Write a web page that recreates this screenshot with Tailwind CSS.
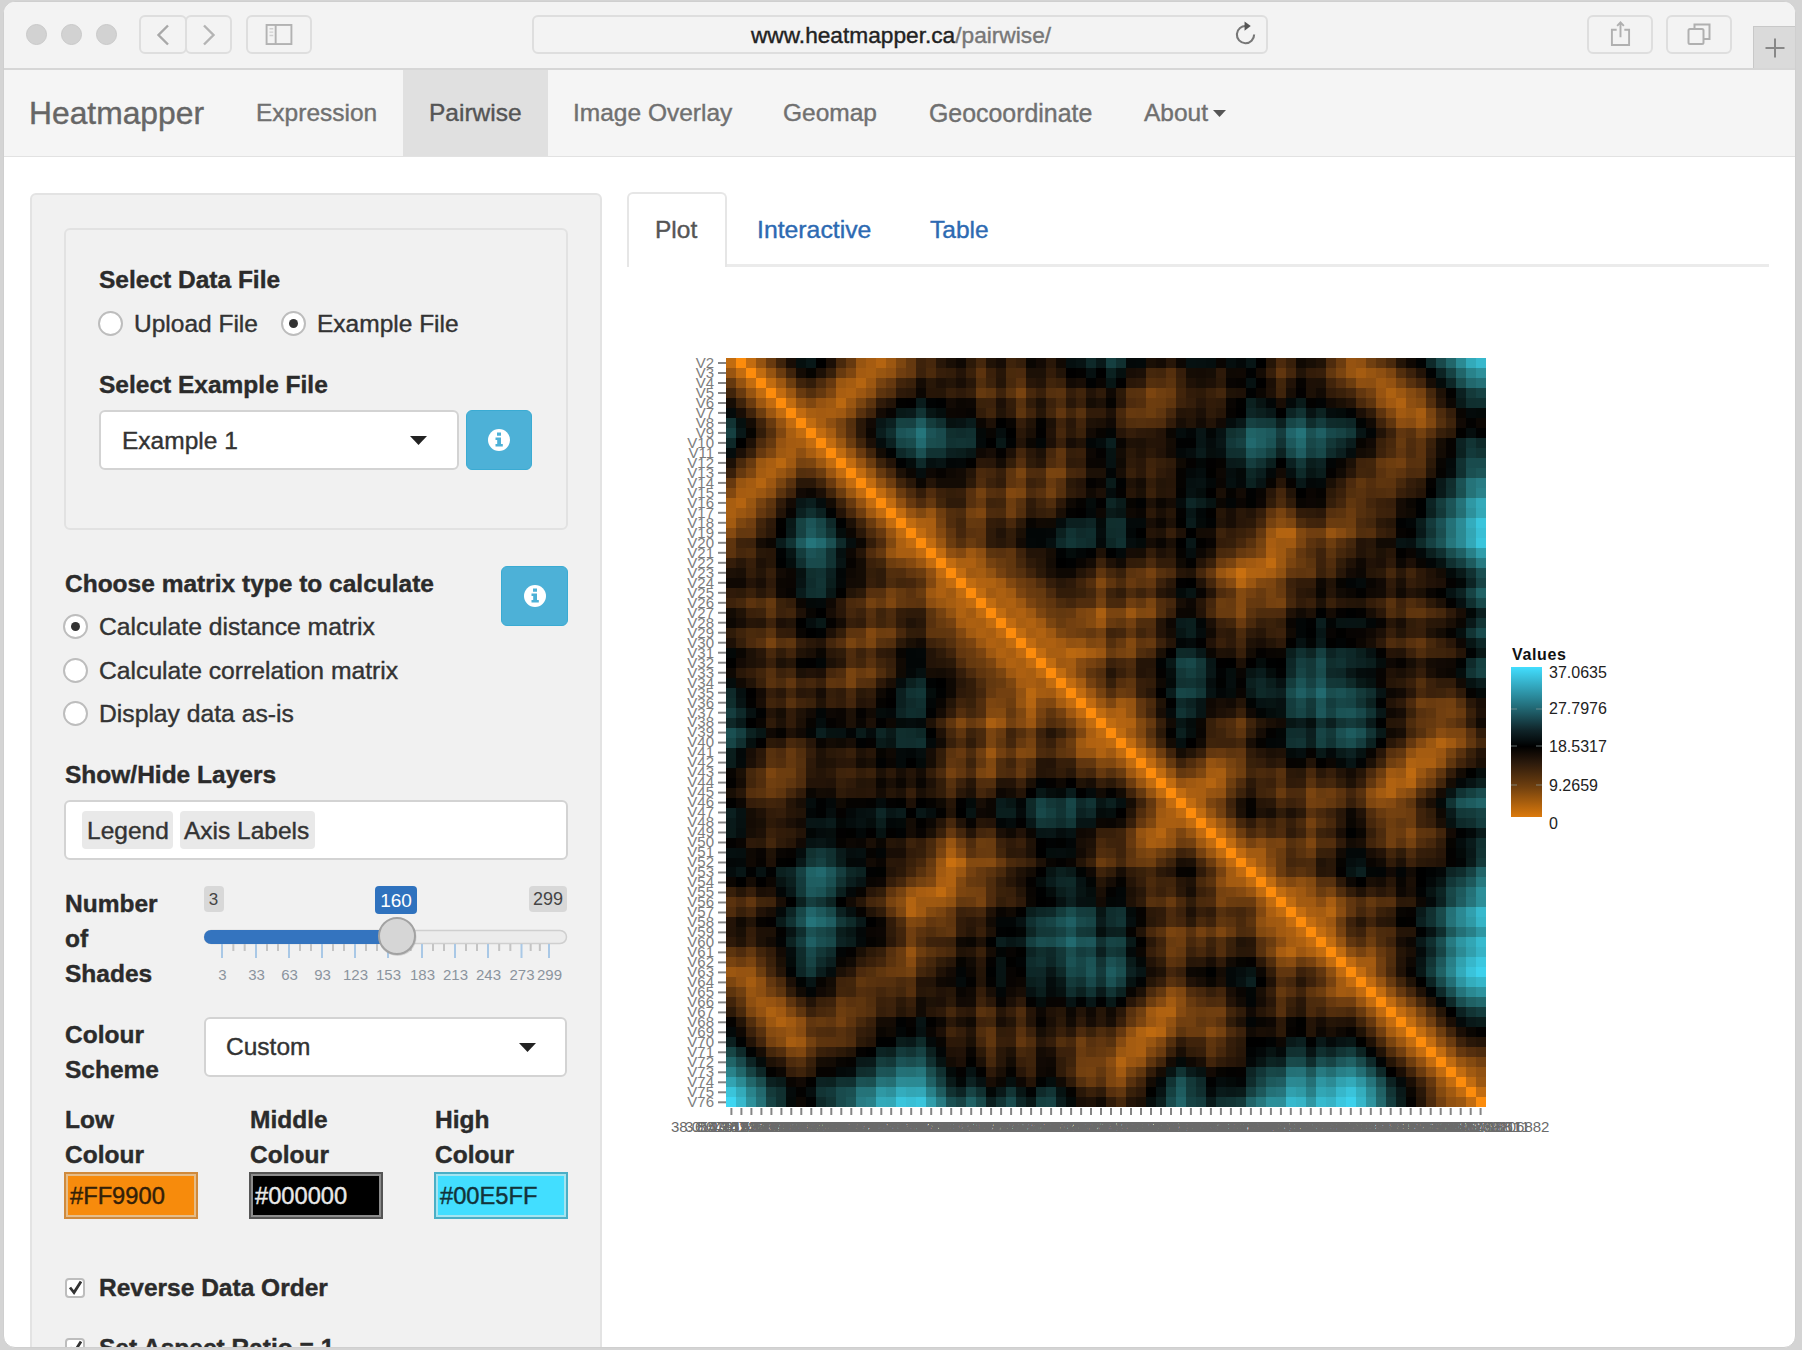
<!DOCTYPE html>
<html lang="en">
<head>
<meta charset="utf-8">
<title>Heatmapper</title>
<script src="https://cdn.jsdelivr.net/npm/@tailwindcss/browser@4"></script>
</head>
<body class="h-[1350px] w-[1802px] overflow-hidden bg-[#d4d4d4] pt-[1px] pl-[3px] font-['Liberation_Sans',Arial,sans-serif] text-[24.5px] leading-[35px] text-[#333] [-webkit-text-stroke-width:0.4px]">
<div class="relative h-[1347px] w-[1793px] overflow-hidden rounded-xl border border-[#cfcfcf] bg-white">

  <!-- Browser toolbar -->
  <header class="relative flex h-[68px] items-start border-b-2 border-[#d6d6d6] bg-[#f3f3f3] pt-[13px] pl-[22px]">
    <div class="flex h-[38px] items-center gap-[14px]">
      <span class="size-[21px] rounded-full border border-[#c9c9c9] bg-[#d2d2d2]"></span>
      <span class="size-[21px] rounded-full border border-[#c9c9c9] bg-[#d2d2d2]"></span>
      <span class="size-[21px] rounded-full border border-[#c9c9c9] bg-[#d2d2d2]"></span>
    </div>
    <div class="ml-[22px] flex">
      <button class="flex h-[39px] w-[48px] items-center justify-center rounded-md border-2 border-[#dedede]">
        <svg class="h-[22px] w-[14px]" viewBox="0 0 14 22" fill="none" stroke="#a8a8a8" stroke-width="2.4"><path d="M12 1.5 2.5 11 12 20.500"/></svg>
      </button>
      <button class="-ml-[2px] flex h-[39px] w-[47px] items-center justify-center rounded-md border-2 border-[#dedede]">
        <svg class="h-[22px] w-[14px]" viewBox="0 0 14 22" fill="none" stroke="#b4b4b4" stroke-width="2.4"><path d="M2 1.500 11.500 11 2 20.500"/></svg>
      </button>
    </div>
    <button class="ml-[14px] flex h-[39px] w-[66px] items-center justify-center rounded-md border-2 border-[#dedede]">
      <svg class="h-[21px] w-[28px]" viewBox="0 0 28 22" fill="none" stroke="#b2b2b2" stroke-width="2"><rect x="1" y="1" width="26" height="20"/><path d="M10.500 1v20"/><path d="M4 5h4M4 8.500h4M4 12h4" stroke="#cfcfcf" stroke-width="1.500"/></svg>
    </button>
    <div class="ml-[220px] flex h-[39px] w-[736px] items-center rounded-md border-2 border-[#dedede] pr-2">
      <div class="flex-1 pl-[34px] text-center text-[22.700px] leading-[30px] text-[#777]"><span class="text-[#222]">www.heatmapper.ca</span>/pairwise/</div>
      <svg class="mr-[1px] -mt-[2px] h-[25px] w-[23px]" viewBox="0 0 24 26" fill="none" stroke="#777" stroke-width="2.200"><path d="M13 5.200A9 9 0 1 0 21 14"/><path d="M11 0.500 17.500 5.200 11 10Z" fill="#555" stroke="none"/></svg>
    </div>
    <button class="ml-[319px] flex h-[39px] w-[66px] items-center justify-center rounded-md border-2 border-[#dedede]">
      <svg class="-mt-[3px] h-[29px] w-[21px]" viewBox="0 0 22 28" fill="none" stroke="#b0b0b0" stroke-width="2"><path d="M7 10H2v16h18V10h-5"/><path d="M11 18V3M7.500 6 11 2.300 14.500 6"/></svg>
    </button>
    <button class="ml-[13px] flex h-[39px] w-[66px] items-center justify-center rounded-md border-2 border-[#dedede]">
      <svg class="-mt-[1px] h-[22px] w-[24px]" viewBox="0 0 24 22" fill="none" stroke="#b0b0b0" stroke-width="2"><rect x="1.500" y="6" width="15" height="15" rx="1.500"/><path d="M7.500 6V1.500H22.500V16H17"/></svg>
    </button>
    <div class="absolute right-0 bottom-0 flex h-[42px] w-[42px] items-center justify-center border-t border-l border-[#c8c8c8] bg-[#dadada]">
      <svg class="size-[20px]" viewBox="0 0 20 20" stroke="#888" stroke-width="2"><path d="M10 0.500v19M0.500 10h19"/></svg>
    </div>
  </header>

  <!-- Site navigation -->
  <nav class="flex h-[87px] items-stretch border-b border-[#e2e2e2] bg-[#f5f5f5] leading-[86px] whitespace-nowrap text-[#707070]">
    <div class="w-[226px] pl-[25px] text-[31.800px] text-[#666]">Heatmapper</div>
    <div class="w-[173px] pl-[26px] text-[24.500px]">Expression</div>
    <div class="w-[145px] bg-[#e0e0e0] pl-[26px] text-[#555]">Pairwise</div>
    <div class="w-[209px] pl-[25px]">Image Overlay</div>
    <div class="w-[147px] pl-[26px]">Geomap</div>
    <div class="w-[214px] pl-[25px] text-[24.900px]">Geocoordinate</div>
    <div class="flex items-center gap-[5px] pl-[26px]">About<svg class="h-[7px] w-[13px]" viewBox="0 0 13 7" fill="#555"><path d="M0 0h13L6.500 7z"/></svg></div>
  </nav>

  <div class="flex items-start pt-[36px] pl-[26px]">

    <!-- Controls -->
    <aside class="flex h-[1200px] w-[572px] flex-col rounded-md border-2 border-[#e3e3e3] bg-[#f1f1f1] pt-[33px] pr-[33px] pl-[33px]">
      <section class="-ml-[1px] h-[302px] w-[504px] shrink-0 rounded-md border-2 border-[#e2e2e2] pt-[32px] pl-[33px]">
        <h3 class="font-bold text-[#2b2b2b]">Select Data File</h3>
        <div class="mt-[9px] flex items-center">
          <span class="-ml-[1px] size-[25px] rounded-full border-2 border-[#bdbdbd] bg-white"></span>
          <span class="ml-[11px] w-[147px]">Upload File</span>
          <span class="flex size-[25px] items-center justify-center rounded-full border-2 border-[#bdbdbd] bg-white"><i class="size-[9px] rounded-full bg-[#333]"></i></span>
          <span class="ml-[11px]">Example File</span>
        </div>
        <h3 class="mt-[26px] font-bold text-[#2b2b2b]">Select Example File</h3>
        <div class="mt-[8px] flex gap-[7px]">
          <div class="flex h-[60px] w-[360px] items-center justify-between rounded-md border-2 border-[#d3d3d3] bg-white pr-[30px] pl-[21px]">Example 1<svg class="h-[9px] w-[17px]" viewBox="0 0 17 9" fill="#222"><path d="M0 0h17L8.500 9z"/></svg></div>
          <button class="flex h-[60px] w-[66px] items-center justify-center rounded-md border border-[#3aabd3] bg-[#4db1d7]">
            <svg class="size-[22px]" viewBox="0 0 22 22"><circle cx="11" cy="11" r="11" fill="#fff"/><path d="M9 3.500h4v3.200H9zM7.500 8.500H13v6.500h1.800v2.500H7.500V15h1.700v-4H7.500z" fill="#4db1d7"/></svg>
          </button>
        </div>
      </section>

      <section class="mt-[36px] flex justify-between">
        <div>
          <h3 class="font-bold text-[#2b2b2b]">Choose matrix type to calculate</h3>
          <div class="mt-[8px] flex items-center gap-[11px] text-[24.700px]"><span class="-ml-[2px] flex size-[25px] items-center justify-center rounded-full border-2 border-[#bdbdbd] bg-white"><i class="size-[9px] rounded-full bg-[#333]"></i></span>Calculate distance matrix</div>
          <div class="mt-[9px] flex items-center gap-[11px] text-[24.700px]"><span class="-ml-[2px] size-[25px] rounded-full border-2 border-[#bdbdbd] bg-white"></span>Calculate correlation matrix</div>
          <div class="mt-[8px] flex items-center gap-[11px] text-[24.700px]"><span class="-ml-[2px] size-[25px] rounded-full border-2 border-[#bdbdbd] bg-white"></span>Display data as-is</div>
        </div>
        <button class="-mr-px flex h-[60px] w-[67px] items-center justify-center rounded-md border border-[#3aabd3] bg-[#4db1d7]">
          <svg class="size-[22px]" viewBox="0 0 22 22"><circle cx="11" cy="11" r="11" fill="#fff"/><path d="M9 3.500h4v3.200H9zM7.500 8.500H13v6.500h1.800v2.500H7.500V15h1.700v-4H7.500z" fill="#4db1d7"/></svg>
        </button>
      </section>

      <h3 class="mt-[26px] font-bold text-[#2b2b2b]">Show/Hide Layers</h3>
      <div class="mt-[8px] -ml-[1px] flex h-[60px] w-[504px] shrink-0 items-center gap-[7px] rounded-md border-2 border-[#d3d3d3] bg-white pl-[16px]">
        <span class="h-[38px] w-[91px] rounded-[4px] bg-[#e9e9e9] pl-[5px] leading-[39px]">Legend</span>
        <span class="h-[38px] w-[135px] rounded-[4px] bg-[#e9e9e9] pl-[4px] leading-[39px]">Axis Labels</span>
      </div>

      <section class="mt-[25px] flex h-[106px]">
        <h3 class="mt-px w-[139px] font-bold text-[#2b2b2b]">Number<br>of<br>Shades</h3>
        <div class="relative w-[363px]">
          <svg class="absolute -top-px left-0 overflow-visible" width="363" height="106" id="slider"></svg>
        </div>
      </section>

      <section class="mt-[26px] flex h-[75px]">
        <h3 class="w-[139px] font-bold text-[#2b2b2b]">Colour<br>Scheme</h3>
        <div class="flex h-[60px] w-[363px] items-center justify-between rounded-md border-2 border-[#d3d3d3] bg-white pr-[29px] pl-[20px] leading-[58px]">Custom<svg class="h-[9px] w-[17px]" viewBox="0 0 17 9" fill="#222"><path d="M0 0h17L8.500 9z"/></svg></div>
      </section>

      <section class="mt-[10px] flex gap-[51px] font-bold text-[#2b2b2b]">
        <div class="w-[134px] shrink-0">Low<br>Colour<div class="-ml-[1px] h-[47px] w-[134px] border-2 border-[#d08a3c] bg-[#f78b0c] pl-[4px] text-[23.700px] leading-[44px] font-normal text-[#332008] outline-2 -outline-offset-4 outline-[#e5bd8a]">#FF9900</div></div>
        <div class="w-[134px] shrink-0">Middle<br>Colour<div class="-ml-[1px] h-[47px] w-[134px] border-2 border-[#555] bg-black pl-[4px] text-[23.700px] leading-[44px] font-normal text-[#e8e8e8] outline-2 -outline-offset-4 outline-[#8c8c8c]">#000000</div></div>
        <div class="w-[134px] shrink-0">High<br>Colour<div class="-ml-[1px] h-[47px] w-[134px] border-2 border-[#4aafc6] bg-[#42deff] pl-[4px] text-[23.700px] leading-[44px] font-normal text-[#12333a] outline-2 -outline-offset-4 outline-[#a5e4f0]">#00E5FF</div></div>
      </section>

      <div class="mt-[51px] flex items-center font-bold text-[#2b2b2b]">
        <span class="mr-[14px] flex size-[20px] items-center justify-center rounded-[4px] border-2 border-[#bdbdbd] bg-white"><svg class="size-[15px]" viewBox="0 0 15 15" fill="none" stroke="#333" stroke-width="2.800"><path d="M2 7.500 6 12.500 13 1.500"/></svg></span>Reverse Data Order
      </div>
      <div class="mt-[25px] flex items-center font-bold text-[#2b2b2b]">
        <span class="mr-[14px] flex size-[20px] items-center justify-center rounded-[4px] border-2 border-[#bdbdbd] bg-white"><svg class="size-[15px]" viewBox="0 0 15 15" fill="none" stroke="#333" stroke-width="2.800"><path d="M2 7.500 6 12.500 13 1.500"/></svg></span>Set Aspect Ratio = 1
      </div>
    </aside>

    <!-- Plot panel -->
    <main class="ml-[25px] w-[1142px]">
      <div class="flex h-[74px] text-[#2d6ab2]">
        <div class="-mt-[1px] h-[75px] w-[100px] rounded-t-md border-2 border-b-0 border-[#e6e6e6] pl-[26px] leading-[72px] text-[#555]">Plot</div>
        <div class="flex-1 border-b-[3px] border-[#ebebeb] pl-[30px] leading-[73px]"><span class="inline-block w-[173px] text-[24.800px]">Interactive</span>Table</div>
      </div>
      <svg class="block overflow-visible" width="1142" height="1000" id="plot"></svg>
    </main>
  </div>
</div>

<script>
// Atom positions (x y z), one per residue; the heat map shows their pairwise distances.
const atoms = `26.266 25.413 2.842
26.850 29.021 3.898
26.235 30.058 7.497
26.772 33.436 9.197
28.605 33.965 12.503
27.691 37.315 14.143
30.225 38.643 16.662
29.607 41.180 19.467
31.422 43.940 17.553
28.978 43.960 14.678
31.191 42.012 12.331
29.542 39.020 10.653
31.720 36.289 9.176
30.505 33.884 6.512
31.677 30.275 6.639
31.220 27.341 4.275
30.288 24.245 6.193
28.468 20.940 5.980
25.829 19.825 8.494
28.054 16.835 9.210
30.796 19.083 10.566
31.398 19.064 14.286
31.288 21.201 17.417
35.031 21.722 17.069
35.590 21.945 13.302
33.533 25.097 13.978
35.596 26.715 16.736
38.794 25.761 14.880
37.471 27.391 11.668
36.731 30.570 13.645
40.269 30.508 15.115
41.718 30.022 11.643
39.808 32.994 10.233
39.676 35.547 13.072
42.345 34.269 15.431
40.226 33.716 18.509
41.461 30.751 20.594
38.817 28.020 20.889
39.063 28.063 24.695
37.738 31.637 23.712
34.738 30.875 21.473
31.200 30.329 22.780
28.762 29.573 19.906
25.034 30.170 20.401
22.126 29.062 18.183
18.443 29.143 19.083
19.399 29.894 22.655
21.550 26.796 23.133
25.349 26.872 23.643
26.826 24.521 21.012
29.015 21.657 22.288
32.262 20.670 20.514
31.568 16.962 19.825
28.108 17.439 18.276
27.574 18.192 14.563
25.594 21.109 13.072
22.924 18.583 12.025
21.59 17.31 15.14
20.81 20.59 16.51
18.11 20.92 14.06
20.40 22.33 11.54
19.54 24.53 8.54
20.68 26.73 5.61
20.53 30.15 7.09
20.53 29.76 10.90
22.23 32.18 13.24
25.08 32.13 15.80
25.71 35.02 18.07
28.20 33.55 20.38
31.28 35.44 21.09
32.50 35.21 24.52
35.42 34.50 26.74
38.88 36.10 27.42
41.28 34.61 29.87
39.91 35.41 33.30
39.02 38.99 33.95`.split('\n').map(l => l.split(' ').map(Number));

const dist = (a, b) => Math.hypot(a[0] - b[0], a[1] - b[1], a[2] - b[2]);
const MID = 18.5317;
function colour(d) {
  const v = Math.min(1, Math.pow(Math.abs(1 - d / MID), 1.06));
  const lift = 4 * v * (1 - v);
  return d < MID
    ? `rgb(${Math.round(252 * v - 6 * lift)},${Math.round(140 * v - 3 * lift)},${Math.round(12 * v + 10 * lift)})`
    : `rgb(${Math.round(64 * v + 4 * lift)},${Math.round(224 * v)},${Math.round(255 * v - 10 * lift)})`;
}

// Cell grid origin and cell size inside the plot.
const X0 = 99.4, Y0 = 91, CW = 9.99, CH = 9.99;
let h = '<g shape-rendering="crispEdges">';
for (let r = 1; r < 76; r++)
  for (let c = 0; c < 76; c++)
    h += `<rect x="${(X0 + c * CW).toFixed(2)}" y="${(Y0 + (r - 1) * CH).toFixed(2)}" width="10" height="10" fill="${colour(dist(atoms[r], atoms[c]))}"/>`;
h += '</g><g font-size="15" fill="#7d7d7d" text-anchor="end">';
for (let r = 0; r < 75; r++) {
  const y = Y0 + r * CH + 5;
  h += `<text x="87" y="${(y + 4.8).toFixed(1)}">V${r + 2}</text><path d="M91 ${y.toFixed(1)}h8" stroke="#858585" stroke-width="2"/>`;
}
h += '</g><g font-size="15" fill="#6a6a6a" text-anchor="middle">';
for (let c = 0; c < 76; c++) {
  const x = (X0 + c * CW + 5).toFixed(1);
  const label = c === 0 ? '38.054391532681' : c === 75 ? '36.95481739206882' : dist(atoms[0], atoms[c]).toFixed(12);
  h += `<path d="M${x} ${Y0 + 750}v7" stroke="#858585" stroke-width="2"/><text x="${x}" y="${Y0 + 773.5}">${label}</text>`;
}
h += '</g>';
h += `<defs><linearGradient id="scale" x1="0" y1="0" x2="0" y2="1"><stop offset="0" stop-color="#42deff"/><stop offset=".27" stop-color="#226a76"/><stop offset=".42" stop-color="#10252a"/><stop offset=".53" stop-color="#000"/><stop offset=".64" stop-color="#2c1a0c"/><stop offset=".8" stop-color="#70400f"/><stop offset="1" stop-color="#dc7a0c"/></linearGradient></defs>
<rect x="884" y="400" width="31" height="150" fill="url(#scale)"/>
<path d="M884 442h6M909 442h6M884 479h6M909 479h6M884 518h6M909 518h6" stroke="#8a9a9a" stroke-opacity=".7"/>
<text x="885" y="393" font-size="16" font-weight="bold" fill="#111" textLength="54">Values</text>
<g font-size="16" fill="#222"><text x="922" y="411">37.0635</text><text x="922" y="447">27.7976</text><text x="922" y="485">18.5317</text><text x="922" y="524">9.2659</text><text x="922" y="562">0</text></g>`;
document.getElementById('plot').innerHTML = h;

// Slider: badges, track, tick marks and handle.
const majors = [[18, 3], [52, 33], [85, 63], [118, 93], [151, 123], [184, 153], [218, 183], [251, 213], [284, 243], [317.5, 273], [345, 299]];
let s = `<rect x="0.500" y="46.500" width="362" height="13" rx="6.500" fill="#ececec" stroke="#cfcfcf" stroke-width="1.500"/>
<path d="M7 46H192v14H7a7 7 0 0 1 0-14z" fill="#3474bf"/>`;
majors.forEach(([x, n], i) => {
  s += `<path d="M${x} 60v14" stroke="#a9c8e6" stroke-width="2"/><text x="${x + 0.5}" y="96" font-size="15" fill="#8b949e" text-anchor="middle">${n}</text>`;
  if (i < 10) {
    const w = majors[i + 1][0] - x;
    s += `<path d="M${x + w / 3} 60v7M${x + 2 * w / 3} 60v7" stroke="#c4c4c4" stroke-width="2"/>`;
  }
});
s += `<g text-anchor="middle"><rect x="0" y="2" width="20" height="26" rx="4" fill="#d8d8d8"/><text x="9.500" y="21" font-size="17" fill="#444">3</text>
<rect x="171" y="2" width="42" height="28" rx="4" fill="#2f72be"/><text x="192" y="23" font-size="19" fill="#fff">160</text>
<rect x="325" y="2" width="38" height="26" rx="4" fill="#d8d8d8"/><text x="344" y="21" font-size="18" fill="#444">299</text></g>
<circle cx="193.500" cy="53" r="19" fill="#999" opacity=".35"/><circle cx="193" cy="52" r="18" fill="#d6d6d6" stroke="#a2a2a2" stroke-width="2"/>`;
document.getElementById('slider').innerHTML = s;
</script>
</body>
</html>
